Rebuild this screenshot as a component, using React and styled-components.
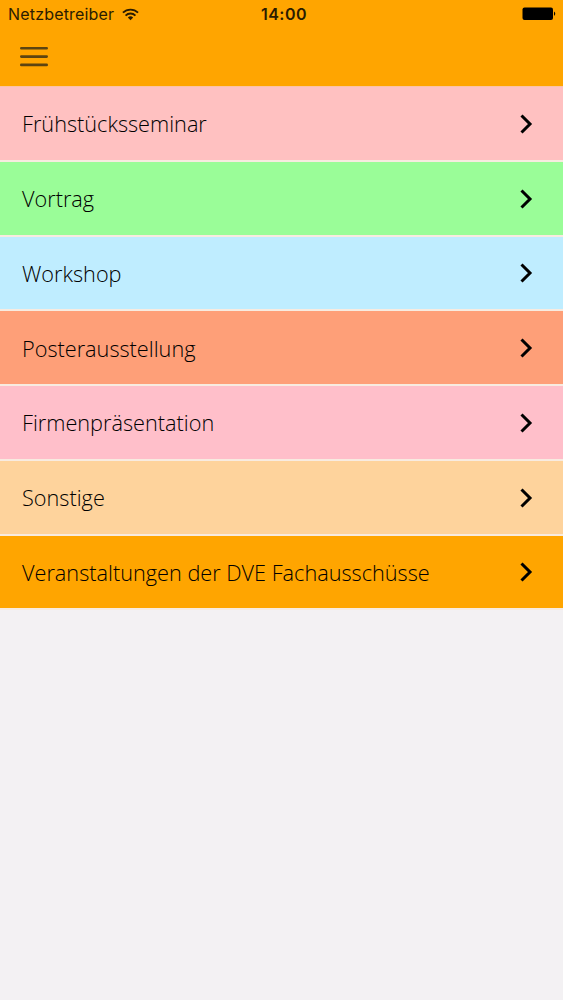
import styled, { createGlobalStyle } from 'styled-components'

const GlobalStyle = createGlobalStyle`
    * {
        box-sizing: border-box;
    }

    body {
        margin: 0;
        background-color: #f3f1f3;
        color: #000;
    }
`

const Screen = styled.div`
    min-height: 1000px;
    background-color: #f3f1f3;
`

const Header = styled.header`
    height: 86px;
    background-color: #ffa500;
`

const StatusBar = styled.div`
    height: 28px;
    padding: 0 7px 0 8px;
    display: grid;
    grid-template-columns: 1fr auto 1fr;
    align-items: center;
    font-family: Inter, sans-serif;
    font-size: 16px;
`

const Carrier = styled.div`
    display: flex;
    align-items: center;
    gap: 8px;
    letter-spacing: .18px;
    color: #2b1c00;
`

const Time = styled.div`
    padding-left: 4px;
    font-weight: 600;
    letter-spacing: .5px;
    color: #2b1c00;
`

const Battery = styled.svg`
    justify-self: end;
`

const MenuBtn = styled.button`
    margin: 18px 0 0 20px;
    padding: 0;
    border: none;
    background: none;
    display: block;
    cursor: pointer;

    svg {
        display: block;
    }
`

const List = styled.ul`
    margin: 0;
    padding: 0;
    list-style: none;
    border-top: 1px solid #fbc4a4;
`

const Item = styled.li`
    height: 74.75px;
    padding: 1px 30px 0 22px;
    display: flex;
    align-items: center;
    justify-content: space-between;
    background-color: ${({ $color }) => $color};
    border-bottom: 2px solid #f8ebe0;
    cursor: pointer;
`

const Label = styled.span`
    font-family: "Open Sans", sans-serif;
    font-weight: 300;
    font-size: 21.7px;
    white-space: nowrap;
`

const categories = [
    { name: 'Frühstücksseminar', color: '#ffc1c1' },
    { name: 'Vortrag', color: '#9afd98' },
    { name: 'Workshop', color: '#bfedff' },
    { name: 'Posterausstellung', color: '#fe9f78' },
    { name: 'Firmenpräsentation', color: '#ffbfca' },
    { name: 'Sonstige', color: '#fed39c' },
    { name: 'Veranstaltungen der DVE Fachausschüsse', color: '#ffa500' },
]

function Wifi() {
    return (
        <svg width="17" height="13" viewBox="0 0 18 13" fill="none" stroke="#2b1c00" strokeWidth="2">
            <path d="M1 4.6a11.3 11.3 0 0 1 16 0M3.8 7.6a7.3 7.3 0 0 1 10.4 0" />
            <path d="M9 12.5 6.2 9.7a4 4 0 0 1 5.6 0z" fill="#2b1c00" stroke="none" />
        </svg>
    )
}

function Chevron() {
    return (
        <svg width="14" height="20" viewBox="0 0 14 20" fill="none" stroke="#000" strokeWidth="3">
            <path d="M2.5 1.5 11 10l-8.5 8.5" />
        </svg>
    )
}

function App() {
    return (
        <Screen>
            <GlobalStyle />
            <Header>
                <StatusBar>
                    <Carrier>Netzbetreiber <Wifi /></Carrier>
                    <Time>14:00</Time>
                    <Battery width="34" height="14" viewBox="0 0 34 14">
                        <rect x="0.5" y="0.5" width="30.5" height="12.5" rx="2" />
                        <path d="M32 4.5q2.5 2.2 0 4.4z" />
                    </Battery>
                </StatusBar>
                <MenuBtn aria-label="Menü">
                    <svg width="28" height="21" viewBox="0 0 28 21" stroke="#5c4411" strokeWidth="2.6" strokeLinecap="round">
                        <path d="M1.3 2.2h25.4M1.3 10.6h25.4M1.3 18.9h25.4" />
                    </svg>
                </MenuBtn>
            </Header>
            <List>
                {categories.map(({ name, color }) => (
                    <Item key={name} $color={color}>
                        <Label>{name}</Label>
                        <Chevron />
                    </Item>
                ))}
            </List>
        </Screen>
    )
}

export default App
